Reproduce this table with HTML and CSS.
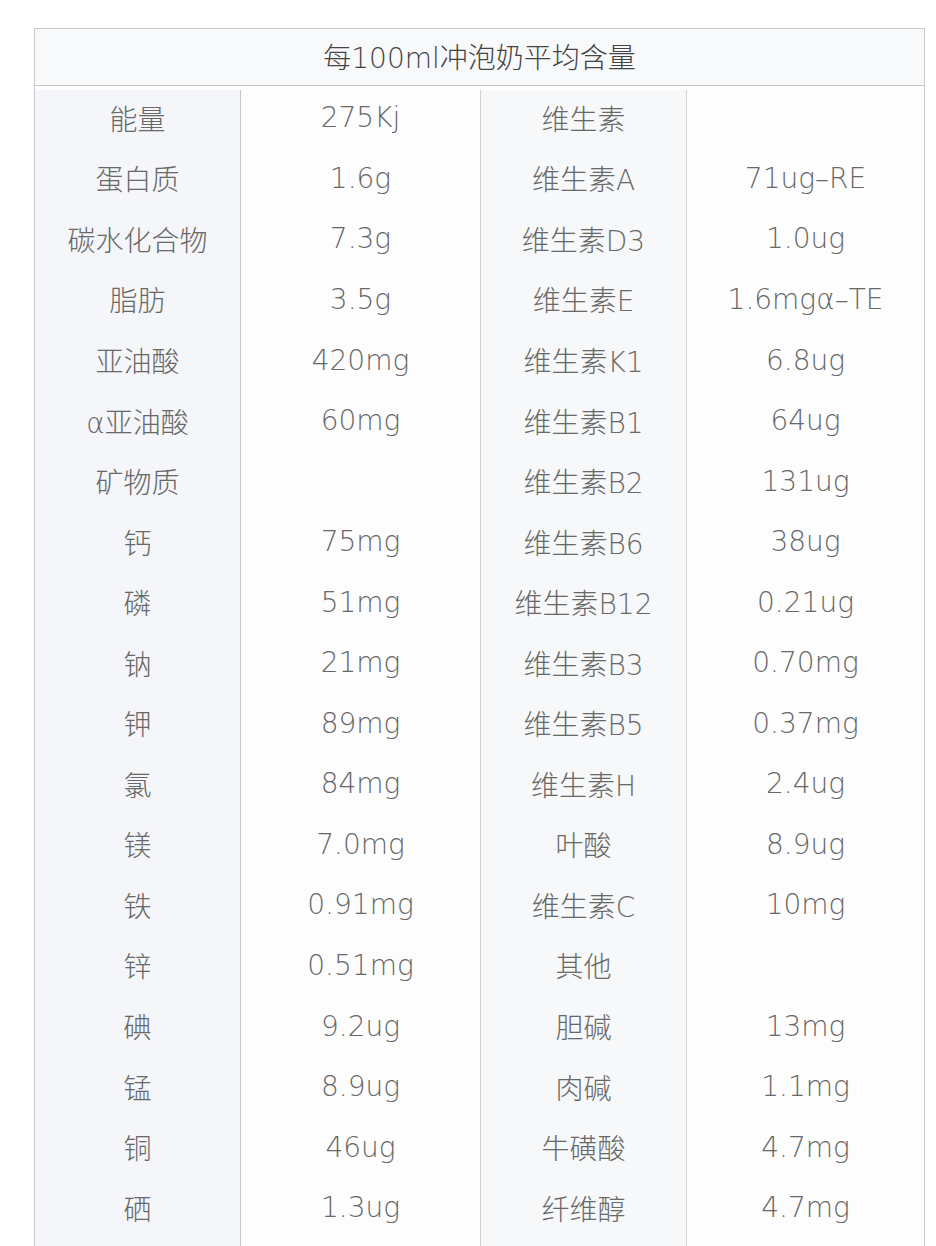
FILE: index.html
```html
<!DOCTYPE html>
<html lang="zh-CN">
<head>
<meta charset="utf-8">
<link rel="stylesheet" href="styles.css">
</head>
<body>
<div class="table">
  <div class="title">每100ml冲泡奶平均含量</div>
  <div class="c c1">能量</div><div class="c c2">275Kj</div><div class="c c3">维生素</div><div class="c c4"></div>
  <div class="c c1">蛋白质</div><div class="c c2">1.6g</div><div class="c c3">维生素A</div><div class="c c4">71ug–RE</div>
  <div class="c c1">碳水化合物</div><div class="c c2">7.3g</div><div class="c c3">维生素D3</div><div class="c c4">1.0ug</div>
  <div class="c c1">脂肪</div><div class="c c2">3.5g</div><div class="c c3">维生素E</div><div class="c c4">1.6mgα–TE</div>
  <div class="c c1">亚油酸</div><div class="c c2">420mg</div><div class="c c3">维生素K1</div><div class="c c4">6.8ug</div>
  <div class="c c1">α亚油酸</div><div class="c c2">60mg</div><div class="c c3">维生素B1</div><div class="c c4">64ug</div>
  <div class="c c1">矿物质</div><div class="c c2"></div><div class="c c3">维生素B2</div><div class="c c4">131ug</div>
  <div class="c c1">钙</div><div class="c c2">75mg</div><div class="c c3">维生素B6</div><div class="c c4">38ug</div>
  <div class="c c1">磷</div><div class="c c2">51mg</div><div class="c c3">维生素B12</div><div class="c c4">0.21ug</div>
  <div class="c c1">钠</div><div class="c c2">21mg</div><div class="c c3">维生素B3</div><div class="c c4">0.70mg</div>
  <div class="c c1">钾</div><div class="c c2">89mg</div><div class="c c3">维生素B5</div><div class="c c4">0.37mg</div>
  <div class="c c1">氯</div><div class="c c2">84mg</div><div class="c c3">维生素H</div><div class="c c4">2.4ug</div>
  <div class="c c1">镁</div><div class="c c2">7.0mg</div><div class="c c3">叶酸</div><div class="c c4">8.9ug</div>
  <div class="c c1">铁</div><div class="c c2">0.91mg</div><div class="c c3">维生素C</div><div class="c c4">10mg</div>
  <div class="c c1">锌</div><div class="c c2">0.51mg</div><div class="c c3">其他</div><div class="c c4"></div>
  <div class="c c1">碘</div><div class="c c2">9.2ug</div><div class="c c3">胆碱</div><div class="c c4">13mg</div>
  <div class="c c1">锰</div><div class="c c2">8.9ug</div><div class="c c3">肉碱</div><div class="c c4">1.1mg</div>
  <div class="c c1">铜</div><div class="c c2">46ug</div><div class="c c3">牛磺酸</div><div class="c c4">4.7mg</div>
  <div class="c c1">硒</div><div class="c c2">1.3ug</div><div class="c c3">纤维醇</div><div class="c c4">4.7mg</div>
  <div class="c c1"></div><div class="c c2"></div><div class="c c3"></div><div class="c c4"></div>
</div>
</body>
</html>
```
FILE: styles.css
```css
html, body {
  margin: 0;
  padding: 0;
  background: #ffffff;
}
body {
  padding: 28px 0 0 34px;
  font-family: "DejaVu Sans", "Noto Sans CJK SC", sans-serif;
  font-weight: 200;
  overflow: hidden;
  height: 1246px;
  box-sizing: border-box;
}
.table {
  width: 891px;
  box-sizing: border-box;
  border: 1px solid #c9c9c9;
  display: grid;
  grid-template-columns: 206px 240px 206px 237px;
  grid-auto-rows: 60.56px;
}
.title {
  grid-column: 1 / 5;
  height: 57px;
  box-sizing: border-box;
  border-bottom: 1px solid #c6c6c6;
  background: #f8f9fb;
  display: flex;
  align-items: center;
  justify-content: center;
  font-size: 28px;
  color: #444444;
  padding-bottom: 2px;
}
.c {
  display: flex;
  align-items: center;
  justify-content: center;
  font-size: 28px;
  color: #686868;
  padding-bottom: 4px;
  box-sizing: border-box;
  white-space: nowrap;
}
.c1 {
  background: #f4f6f9;
  border-right: 1px solid #c4c4c4;
}
.c2 {
  background: #fdfdfe;
  border-right: 1px solid #d2d2d2;
}
.c3 {
  background: #f7f8fa;
  border-right: 1px solid #d2d2d2;
}
.c4 {
  background: #fdfdfe;
}
```
